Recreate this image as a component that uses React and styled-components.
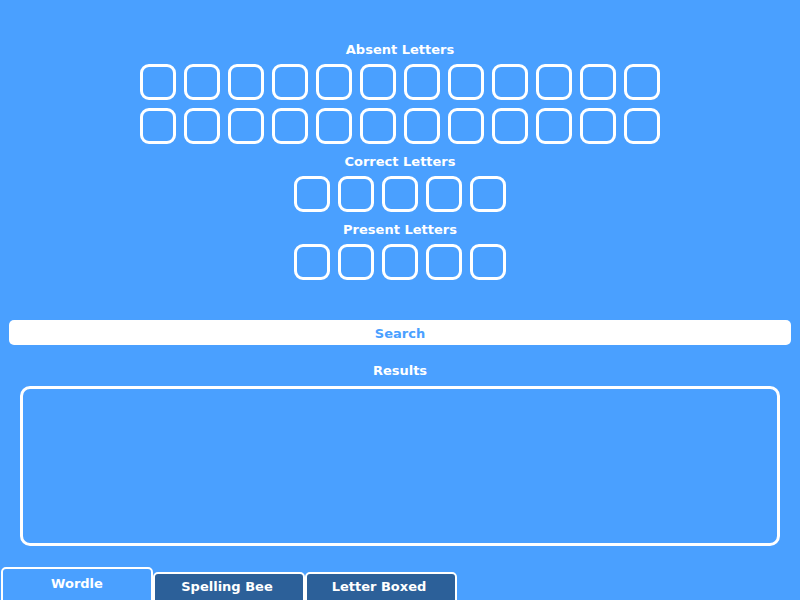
import React from "react";
import styled, { createGlobalStyle } from "styled-components";

const Global = createGlobalStyle`
  html, body { margin: 0; padding: 0; overflow: hidden; background: #4aa0ff; }
  body { font-family: "DejaVu Sans", Verdana, sans-serif; }
`;

const Page = styled.div`
  width: 800px;
  height: 600px;
  display: flex;
  flex-direction: column;
  align-items: center;
  padding-top: 42px;
  box-sizing: border-box;
  color: #fff;
`;

const Label = styled.div`
  font-weight: bold;
  font-size: 13px;
  line-height: 16px;
  text-align: center;
  margin-top: ${(p) => p.$mt || 0}px;
  margin-bottom: ${(p) => p.$mb ?? 6}px;
`;

const Grid = styled.div`
  display: grid;
  grid-template-columns: repeat(${(p) => p.$cols}, 36px);
  gap: 8px;
`;

const Box = styled.div`
  width: 36px;
  height: 36px;
  box-sizing: border-box;
  border: 3px solid #fff;
  border-radius: 9px;
`;

const SearchButton = styled.div`
  margin-top: 40px;
  width: 782px;
  height: 25px;
  padding-top: 2px;
  box-sizing: border-box;
  background: #fff;
  border-radius: 5px;
  color: #4aa0ff;
  font-weight: bold;
  font-size: 13px;
  display: flex;
  align-items: center;
  justify-content: center;
`;

const ResultsBox = styled.div`
  width: 760px;
  height: 160px;
  box-sizing: border-box;
  border: 3px solid #fff;
  border-radius: 10px;
`;

const TabBar = styled.div`
  align-self: stretch;
  margin-top: 21px;
  height: 33px;
  overflow: hidden;
  display: flex;
  align-items: flex-start;
  padding-left: 1px;
`;

const Tab = styled.div`
  width: 152px;
  height: 40px;
  box-sizing: border-box;
  margin-top: ${(p) => (p.$active ? 0 : 5)}px;
  background: ${(p) => (p.$active ? "#4aa0ff" : "#2c6099")};
  border: 2px solid #fff;
  border-radius: 5px 5px 0 0;
  color: #fff;
  font-weight: bold;
  font-size: 13px;
  text-align: center;
  padding-top: ${(p) => (p.$active ? 7 : 5)}px;
  padding-right: ${(p) => (p.$active ? 0 : 4)}px;
`;

const boxes = (n) => Array.from({ length: n }, (_, i) => <Box key={i} />);

export default function App() {
  return (
    <>
      <Global />
      <Page>
        <Label>Absent Letters</Label>
        <Grid $cols={12}>{boxes(24)}</Grid>
        <Label $mt={10}>Correct Letters</Label>
        <Grid $cols={5}>{boxes(5)}</Grid>
        <Label $mt={10}>Present Letters</Label>
        <Grid $cols={5}>{boxes(5)}</Grid>
        <SearchButton>Search</SearchButton>
        <Label $mt={18} $mb={7}>Results</Label>
        <ResultsBox />
        <TabBar>
          <Tab $active>Wordle</Tab>
          <Tab>Spelling Bee</Tab>
          <Tab>Letter Boxed</Tab>
        </TabBar>
      </Page>
    </>
  );
}
